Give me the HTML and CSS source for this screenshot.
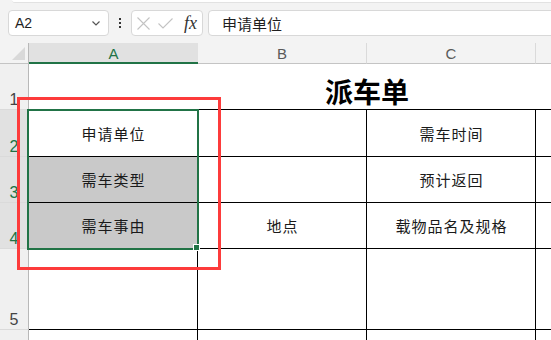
FILE: index.html
```html
<!DOCTYPE html>
<html lang="zh-CN">
<head>
    <meta charset="UTF-8">
    <title>派车单</title>
    <link rel="stylesheet" href="styles.css">
</head>
<body>
    <div class="top">
        <div class="ribbon-edge"></div>
        <div class="toolbar">
            <div class="name-box">
                <span>A2</span>
                <svg class="chevron" width="8" height="5" viewBox="0 0 8 5"><path d="M0.5 0.5 L4 4 L7.5 0.5" fill="none" stroke="#555" stroke-width="1.2"/></svg>
            </div>
            <div class="more"><i></i><i></i><i></i></div>
            <div class="fx-box">
                <svg width="13" height="13" viewBox="0 0 13 13"><path d="M0.5 0.5 L12.5 12.5 M12.5 0.5 L0.5 12.5" stroke="#c3c3c3" stroke-width="1.1"/></svg>
                <svg width="15" height="11" viewBox="0 0 15 11"><path d="M0.5 5.5 L5 10 L14.5 0.5" fill="none" stroke="#c3c3c3" stroke-width="1.1"/></svg>
                <span class="fx">fx</span>
            </div>
            <div class="formula">申请单位</div>
        </div>
    </div>

    <div class="sheet">
        <!-- 列标题 -->
        <div class="corner"></div>
        <div class="col-head active">A</div>
        <div class="col-head">B</div>
        <div class="col-head">C</div>
        <div class="col-head"></div>

        <!-- 第1行 -->
        <div class="row-head">1</div>
        <div class="title">派车单</div>

        <!-- 第2行 -->
        <div class="row-head active">2</div>
        <div class="cell">申请单位</div>
        <div class="cell"></div>
        <div class="cell">需车时间</div>
        <div class="cell"></div>

        <!-- 第3行 -->
        <div class="row-head active">3</div>
        <div class="cell gray">需车类型</div>
        <div class="cell"></div>
        <div class="cell">预计返回</div>
        <div class="cell"></div>

        <!-- 第4行 -->
        <div class="row-head active">4</div>
        <div class="cell gray">需车事由</div>
        <div class="cell">地点</div>
        <div class="cell">载物品名及规格</div>
        <div class="cell"></div>

        <!-- 第5行 -->
        <div class="row-head">5</div>
        <div class="cell"></div>
        <div class="cell"></div>
        <div class="cell"></div>
        <div class="cell"></div>

        <!-- 第6行 -->
        <div class="row-head"></div>
        <div class="cell open"></div>
        <div class="cell open"></div>
        <div class="cell open"></div>
        <div class="cell open"></div>

        <div class="selection"></div>
        <div class="fill-handle"></div>
        <div class="highlight"></div>
    </div>
</body>
</html>
```

FILE: styles.css
```css
html, body {
    margin: 0;
    padding: 0;
}
body {
    width: 551px;
    height: 340px;
    overflow: hidden;
    background-color: #ffffff;
    font-family: "Liberation Sans", "Noto Sans CJK SC", sans-serif;
    color: #222222;
}

/* 编辑栏 */
.top {
    background-color: #f3f3f3;
    height: 43px;
    overflow: hidden;
}
.ribbon-edge {
    height: 2px;
    margin-left: 12px;
    background-color: #ffffff;
    border-bottom: 1px solid #e2e2e2;
    border-bottom-left-radius: 4px;
}
.toolbar {
    display: flex;
    align-items: flex-start;
    padding: 7px 0 0 8px;
}
.name-box {
    box-sizing: border-box;
    flex: none;
    width: 101px;
    height: 26px;
    display: flex;
    align-items: center;
    justify-content: space-between;
    padding: 0 8px 0 6px;
    background-color: #ffffff;
    border: 1px solid #d8d8d8;
    border-radius: 4px;
    font-size: 14px;
    color: #1f1f1f;
}
.more {
    display: flex;
    flex-direction: column;
    gap: 2px;
    margin: 8px 10px 0 10px;
}
.more i {
    display: block;
    width: 2px;
    height: 2px;
    background-color: #333333;
}
.fx-box {
    box-sizing: border-box;
    flex: none;
    width: 72px;
    height: 26px;
    display: flex;
    align-items: center;
    padding-left: 5px;
    background-color: #ffffff;
    border: 1px solid #d8d8d8;
    border-radius: 4px;
}
.fx-box svg + svg {
    margin-left: 8px;
}
.fx {
    margin-left: 11px;
    font-family: "Liberation Serif", serif;
    font-style: italic;
    font-size: 18px;
    color: #333333;
    line-height: 1;
}
.formula {
    box-sizing: border-box;
    flex: 1;
    height: 26px;
    margin: 0 -10px 0 5px;
    padding-left: 13px;
    display: flex;
    align-items: center;
    background-color: #ffffff;
    border: 1px solid #d8d8d8;
    border-radius: 4px;
    font-family: "Noto Sans CJK SC", sans-serif;
    font-size: 15px;
    color: #1f1f1f;
}

/* 工作表 */
.sheet {
    position: relative;
    width: 551px;
    height: 297px;
    overflow: hidden;
    display: grid;
    grid-template-columns: 29px 169px 169px 169px 169px;
    grid-template-rows: 21px 46px 47px 46px 46px 81px 11px;
}
.sheet > div {
    box-sizing: border-box;
}
.corner {
    display: flex;
    justify-content: flex-end;
    align-items: flex-end;
    padding: 0 3px 3px 0;
    background-color: #f3f3f3;
    border-right: 1px solid #b8b8b8;
    border-bottom: 1px solid #c4c4c4;
}
.corner::after {
    content: "";
    width: 13px;
    height: 13px;
    background-color: #d9d9d9;
    clip-path: polygon(100% 0, 100% 100%, 0 100%);
}
.col-head {
    display: flex;
    justify-content: center;
    align-items: flex-end;
    padding-bottom: 1px;
    background-color: #f3f3f3;
    border-right: 1px solid #dadada;
    border-bottom: 1px solid #c4c4c4;
    font-size: 15px;
    color: #5a5a5a;
}
.col-head.active {
    background-color: #e1e1e1;
    border-bottom: 2px solid #217346;
    border-right: none;
    color: #217346;
    padding-bottom: 0;
}
.row-head {
    display: flex;
    justify-content: center;
    align-items: flex-end;
    padding-bottom: 1px;
    background-color: #f0f0f0;
    border-right: 1px solid #b8b8b8;
    border-bottom: 1px solid #dadada;
    font-size: 16px;
    line-height: 1;
    color: #444444;
}
.row-head.active {
    background-color: #e1e1e1;
    color: #217346;
}
.title {
    grid-column: 2 / span 4;
    display: flex;
    justify-content: center;
    align-items: flex-end;
    padding-bottom: 4px;
    border-bottom: 1px solid #000000;
    font-family: "Noto Sans CJK SC", sans-serif;
    font-weight: bold;
    font-size: 28px;
    line-height: 1;
    color: #000000;
}
.cell {
    display: flex;
    justify-content: center;
    align-items: center;
    padding-left: 1px;
    border-right: 1px solid #000000;
    border-bottom: 1px solid #000000;
    font-family: "Noto Sans CJK SC", sans-serif;
    font-size: 15px;
    letter-spacing: 1px;
    color: #1a1a1a;
}
.cell.gray {
    background-color: #c9c9c9;
}
.cell.open {
    border-bottom: none;
}

/* 选区与标注框 */
.selection {
    position: absolute;
    left: 27px;
    top: 66px;
    width: 172px;
    height: 141px;
    border: 2px solid #217346;
}
.fill-handle {
    position: absolute;
    left: 193px;
    top: 201px;
    width: 7px;
    height: 7px;
    background-color: #217346;
    border: 1px solid #ffffff;
}
.highlight {
    position: absolute;
    left: 17px;
    top: 54px;
    width: 204px;
    height: 173px;
    border: 3px solid #fd3b3b;
}
```
